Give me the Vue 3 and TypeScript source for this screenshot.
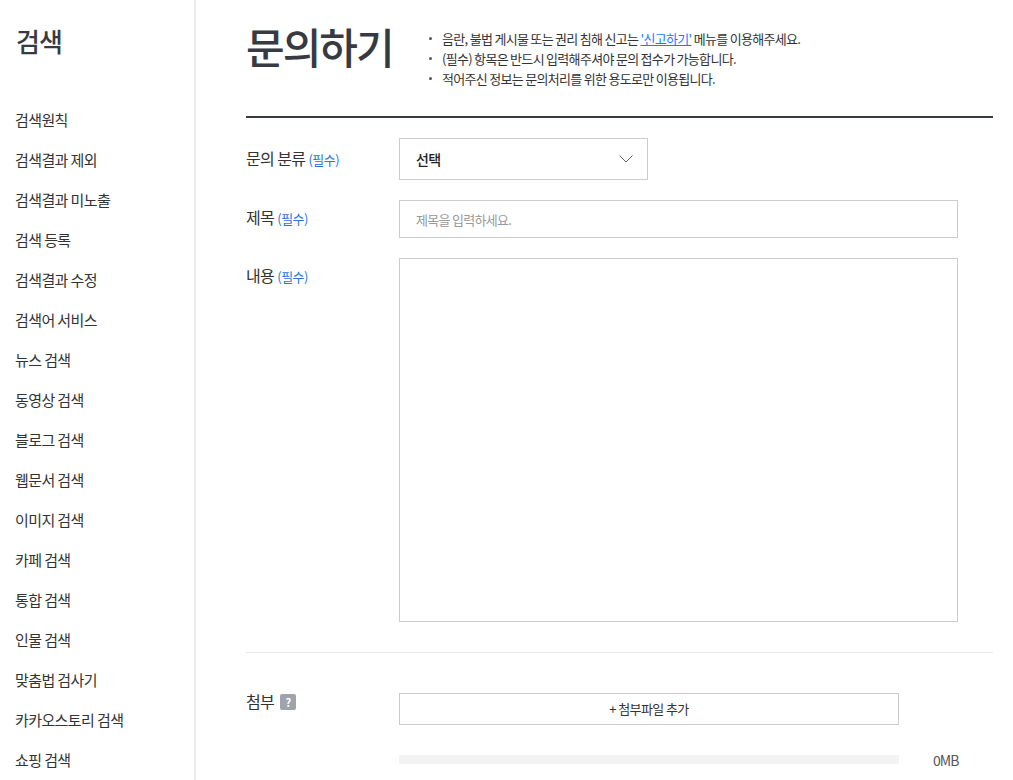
<script setup lang="ts">
const menu: string[] = ['검색원칙','검색결과 제외','검색결과 미노출','검색 등록','검색결과 수정','검색어 서비스','뉴스 검색','동영상 검색','블로그 검색','웹문서 검색','이미지 검색','카페 검색','통합 검색','인물 검색','맞춤법 검사기','카카오스토리 검색','쇼핑 검색']
</script>

<template>
  <div class="page">
    <aside class="side">
      <h2 class="side-title">검색</h2>
      <ul class="menu">
        <li v-for="m in menu" :key="m">{{ m }}</li>
      </ul>
    </aside>
    <main class="main">
      <header class="head">
        <h1 class="title">문의하기</h1>
        <ul class="notes">
          <li>음란, 불법 게시물 또는 권리 침해 신고는 <a class="link">'신고하기'</a> 메뉴를 이용해주세요.</li>
          <li>(필수) 항목은 반드시 입력해주셔야 문의 접수가 가능합니다.</li>
          <li>적어주신 정보는 문의처리를 위한 용도로만 이용됩니다.</li>
        </ul>
      </header>
      <div class="form">
        <div class="row row-select">
          <div class="label">문의 분류 <em>(필수)</em></div>
          <div class="select">
            <span>선택</span>
            <svg width="14" height="8" viewBox="0 0 14 8" fill="none"><path d="M.5.5 7 7 13.5.5" stroke="#666" stroke-width="1"/></svg>
          </div>
        </div>
        <div class="row row-input">
          <div class="label">제목 <em>(필수)</em></div>
          <div class="input">제목을 입력하세요.</div>
        </div>
        <div class="row row-text">
          <div class="label">내용 <em>(필수)</em></div>
          <div class="textarea"></div>
        </div>
        <div class="row row-attach">
          <div class="label">첨부 <span class="help">?</span></div>
          <div class="attach">
            <div class="add">+ 첨부파일 추가</div>
            <div class="usage">
              <div class="bar"></div>
              <span class="mb">0MB</span>
            </div>
          </div>
        </div>
      </div>
    </main>
  </div>
</template>

<style scoped>
.page { display: flex; width: 1013px; height: 780px; overflow: hidden; background: #fff; color: #333; font-family: "Noto Sans CJK KR", "Noto Sans", sans-serif; }
.side { width: 196px; flex: none; box-sizing: border-box; border-right: 2px solid #ececec; padding: 20px 0 0 16px; }
.side-title { margin: 0; font-size: 26px; line-height: 42px; font-weight: 500; letter-spacing: -1px; color: #383a42; }
.menu { list-style: none; margin: 38px 0 0 -1px; padding: 0; }
.menu li { height: 40px; line-height: 40px; font-size: 15px; letter-spacing: -.6px; color: #333; white-space: nowrap; }
.main { flex: 1; min-width: 0; padding: 0 20px 0 50px; }
.head { display: flex; height: 118px; box-sizing: border-box; border-bottom: 2px solid #383a42; }
.title { margin: 14px 0 0; font-size: 42px; line-height: 64px; font-weight: 500; letter-spacing: -2px; color: #383a42; width: 170px; flex: none; }
.notes { list-style: none; margin: 0; padding: 29px 0 0 26px; font-size: 13px; line-height: 20px; letter-spacing: -.7px; color: #333; }
.notes li { position: relative; white-space: nowrap; }
.notes li::before { content: ""; position: absolute; left: -13px; top: 8px; width: 3px; height: 3px; border-radius: 50%; background: #555; }
.link { color: #1a7cff; text-decoration: underline; }
.form { display: flex; flex-direction: column; }
.row { display: flex; }
.label { width: 153px; flex: none; font-size: 16px; line-height: 20px; letter-spacing: -.6px; color: #333; white-space: nowrap; }
.label em { font-style: normal; font-size: 13px; color: #2a74e0; letter-spacing: -.5px; }
.row-select { margin-top: 20px; }
.row-select .label { padding-top: 10px; }
.select { box-sizing: border-box; width: 249px; height: 42px; border: 1px solid #ccc; display: flex; align-items: center; justify-content: space-between; padding: 0 14px 0 17px; font-size: 14px; font-weight: 500; letter-spacing: -.6px; color: #222; }
.select span { margin-top: -1px; margin-left: -1px; }
.row-input { margin-top: 20px; }
.row-input .label { padding-top: 7px; }
.input { box-sizing: border-box; width: 559px; height: 38px; border: 1px solid #ccc; display: flex; align-items: center; padding: 0 16px; font-size: 13px; letter-spacing: -.7px; color: #999; }
.row-text { margin-top: 20px; padding-bottom: 30px; border-bottom: 1px solid #e9e9e9; }
.row-text .label { padding-top: 7px; }
.textarea { box-sizing: border-box; width: 559px; height: 364px; border: 1px solid #ccc; }
.row-attach { margin-top: 40px; }
.row-attach .label { display: flex; align-items: center; gap: 5px; height: 20px; padding-top: 0; margin-top: -2px; }
.help { width: 16px; height: 16px; margin-left: 1px; margin-top: 1px; background: #9fa3ab; border-radius: 2px; color: #fff; font-size: 11px; font-weight: 700; line-height: 16px; text-align: center; letter-spacing: 0; }
.attach { width: 594px; }
.add { box-sizing: border-box; width: 500px; height: 32px; padding-bottom: 2px; border: 1px solid #ccc; display: flex; align-items: center; justify-content: center; font-size: 13px; letter-spacing: -.6px; color: #333; }
.usage { display: flex; align-items: center; margin-top: 30px; height: 9px; }
.bar { width: 500px; height: 9px; background: #f3f3f3; }
.mb { margin-left: 34px; font-size: 14px; letter-spacing: -1px; color: #555; white-space: nowrap; }
</style>
